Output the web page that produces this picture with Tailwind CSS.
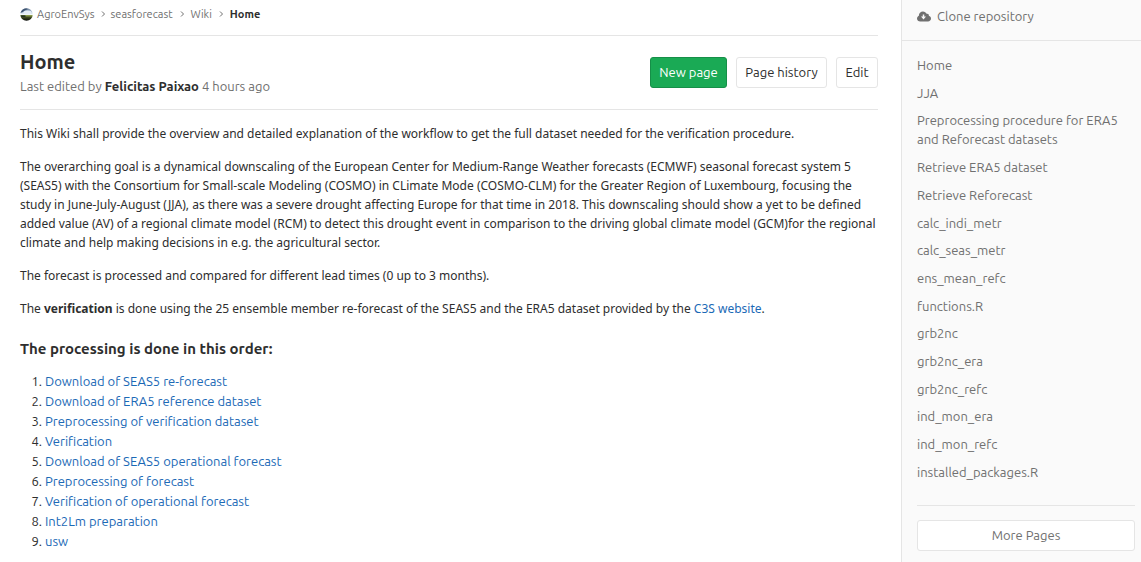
<!DOCTYPE html>
<html lang="en">
<head>
<meta charset="utf-8">
<meta name="viewport" content="width=device-width, initial-scale=1">
<title>Home · Wiki · seasforecast</title>
<script src="https://cdn.jsdelivr.net/npm/@tailwindcss/browser@4"></script>
</head>
<body class="flex h-screen overflow-hidden bg-white font-['Ubuntu','Noto_Sans',sans-serif] text-[13px] leading-[19px] text-[#2e2e2e]">
<main class="min-w-0 flex-1 pl-5 pr-[23px]">
  <nav aria-label="Breadcrumb" class="flex h-9 items-center border-b border-[#e5e5e5] pb-[7px] text-[11px] text-[#707070]">
    <a href="#" class="flex items-center gap-1">
      <svg class="size-[13px]" viewBox="0 0 26 26" aria-hidden="true">
        <defs>
          <linearGradient id="sky" x1="0" y1="0" x2="0" y2="1"><stop offset="0" stop-color="#5f7590"/><stop offset=".3" stop-color="#b9cbe0"/><stop offset=".5" stop-color="#f4f8fb"/><stop offset=".58" stop-color="#8b9c4c"/><stop offset=".75" stop-color="#39431d"/><stop offset="1" stop-color="#0b0d0c"/></linearGradient>
        </defs>
        <circle cx="13" cy="13" r="12.500" fill="url(#sky)"/>
        <path d="M1 10C2 5 7 1 12 1l4 1c-3 2-6 2-8 4s-4 3-7 4z" fill="#3d5370"/>
        <ellipse cx="15" cy="9" rx="8" ry="4" fill="#e4edf6"/>
        <path d="M1 15c4-1 7 0 10 0v3H3z" fill="#24331f"/>
      </svg>
      <span>AgroEnvSys</span>
    </a>
    <svg class="mx-1 size-2" viewBox="0 0 8 8" fill="none" stroke="#707070" aria-hidden="true"><path d="M3 1.500 5.500 4 3 6.500"/></svg>
    <a href="#">seasforecast</a>
    <svg class="mx-[5px] size-2" viewBox="0 0 8 8" fill="none" stroke="#707070" aria-hidden="true"><path d="M3 1.500 5.500 4 3 6.500"/></svg>
    <a href="#">Wiki</a>
    <svg class="mx-[5px] size-2" viewBox="0 0 8 8" fill="none" stroke="#707070" aria-hidden="true"><path d="M3 1.500 5.500 4 3 6.500"/></svg>
    <a href="#" class="font-bold text-[#2e2e2e]">Home</a>
  </nav>

  <header class="flex h-[74px] items-center justify-between border-b border-[#e5e5e5]">
    <div class="pb-0.5">
      <h1 class="text-[20px] font-bold leading-7">Home</h1>
      <p class="leading-5 text-[#707070]">Last edited by <strong class="text-[#2e2e2e]">Felicitas Paixao</strong> 4 hours ago</p>
    </div>
    <div class="flex gap-[9px]">
      <button type="button" class="h-[31px] w-[77px] rounded-[3px] border border-[#168f48] bg-[#1aaa55] text-white">New page</button>
      <button type="button" class="h-[31px] w-[91px] rounded-[3px] border border-[#e5e5e5] bg-white">Page history</button>
      <button type="button" class="h-[31px] w-[42px] rounded-[3px] border border-[#e5e5e5] bg-white">Edit</button>
    </div>
  </header>

  <article class="pt-[14px]">
    <div class="flex flex-col gap-[14px] font-['Noto_Sans',sans-serif] text-[12px]">
      <p>This Wiki shall provide the overview and detailed explanation of the workflow to get the full dataset needed for the verification procedure.</p>
      <p>The overarching goal is a dynamical downscaling of the European Center for Medium-Range Weather forecasts (ECMWF) seasonal forecast system 5 (SEAS5) with the Consortium for Small-scale Modeling (COSMO) in CLimate Mode (COSMO-CLM) for the Greater Region of Luxembourg, focusing the study in June-July-August (JJA), as there was a severe drought affecting Europe for that time in 2018. This downscaling should show a yet to be defined added value (AV) of a regional climate model (RCM) to detect this drought event in comparison to the driving global climate model (GCM)for the regional climate and help making decisions in e.g. the agricultural sector.</p>
      <p>The forecast is processed and compared for different lead times (0 up to 3 months).</p>
      <p>The <strong>verification</strong> is done using the 25 ensemble member re-forecast of the SEAS5 and the ERA5 dataset provided by the <a href="#" class="text-[#1b69b6]">C3S website</a>.</p>
    </div>
    <h2 class="mb-3 mt-[21px] text-[15px] font-bold leading-5">The processing is done in this order:</h2>
    <ol class="list-decimal pl-[25px] leading-5">
      <li><a href="#" class="text-[#1b69b6]">Download of SEAS5 re-forecast</a></li>
      <li><a href="#" class="text-[#1b69b6]">Download of ERA5 reference dataset</a></li>
      <li><a href="#" class="text-[#1b69b6]">Preprocessing of verification dataset</a></li>
      <li><a href="#" class="text-[#1b69b6]">Verification</a></li>
      <li><a href="#" class="text-[#1b69b6]">Download of SEAS5 operational forecast</a></li>
      <li><a href="#" class="text-[#1b69b6]">Preprocessing of forecast</a></li>
      <li><a href="#" class="text-[#1b69b6]">Verification of operational forecast</a></li>
      <li><a href="#" class="text-[#1b69b6]">Int2Lm preparation</a></li>
      <li><a href="#" class="text-[#1b69b6]">usw</a></li>
    </ol>
  </article>
</main>

<aside class="flex h-screen w-60 shrink-0 flex-col border-l border-[#e5e5e5] bg-[#fafafa] text-[#707070]">
  <div class="flex h-[41px] shrink-0 items-center border-b border-[#e5e5e5] pb-[7px] pl-[15px]">
    <a href="#" class="flex items-center gap-[6px]">
      <svg class="h-[11px] w-[14px]" viewBox="0 0 28 22" fill="#707070" aria-hidden="true"><path fill-rule="evenodd" d="M6.500 21C3 21 0 18.500 0 15c0-2.500 1.500-4.700 3.700-5.700C3.500 4.500 7.300 1 12 1c3.200 0 6 1.900 7.300 4.700 2.600-.9 5 1.300 4.400 4 2.500.7 4.300 3 4.300 5.500 0 3.200-2.600 5.800-6 5.800zM11.500 7v4H8l5 6 5-6h-3.500V7z"/></svg>
      <span>Clone repository</span>
    </a>
  </div>
  <ul class="flex min-h-0 flex-1 flex-col justify-between pb-[23px] pl-[15px] pr-[6px] pt-[15px]">
    <li><a href="#">Home</a></li>
    <li><a href="#">JJA</a></li>
    <li><a href="#">Preprocessing procedure for ERA5 and Reforecast datasets</a></li>
    <li><a href="#">Retrieve ERA5 dataset</a></li>
    <li><a href="#">Retrieve Reforecast</a></li>
    <li><a href="#">calc_indi_metr</a></li>
    <li><a href="#">calc_seas_metr</a></li>
    <li><a href="#">ens_mean_refc</a></li>
    <li><a href="#">functions.R</a></li>
    <li><a href="#">grb2nc</a></li>
    <li><a href="#">grb2nc_era</a></li>
    <li><a href="#">grb2nc_refc</a></li>
    <li><a href="#">ind_mon_era</a></li>
    <li><a href="#">ind_mon_refc</a></li>
    <li><a href="#">installed_packages.R</a></li>
  </ul>
  <div class="ml-[15px] mr-[6px] shrink-0 border-t border-[#e5e5e5] pb-[11px] pt-[14px]">
    <button type="button" class="h-[31px] w-full rounded-[3px] border border-[#e5e5e5] bg-white">More Pages</button>
  </div>
</aside>
</body>
</html>
